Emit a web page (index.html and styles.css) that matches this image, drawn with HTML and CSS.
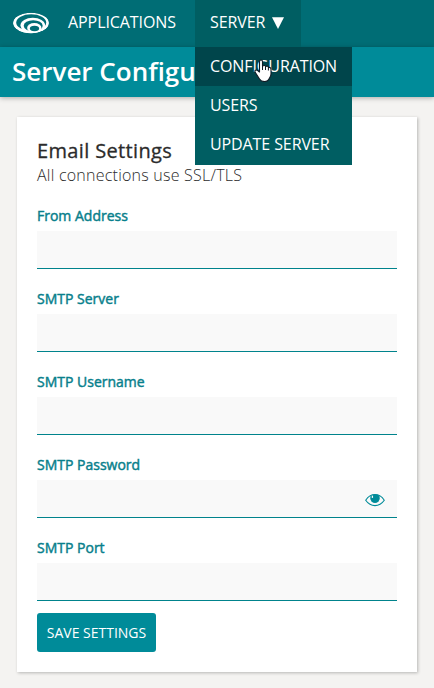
FILE: index.html
```html
<!DOCTYPE html>
<html lang="en">
<head>
<meta charset="utf-8">
<title>Server Configuration</title>
<link rel="stylesheet" href="styles.css">
</head>
<body>
<nav class="nav">
  <a class="logo" href="#" aria-label="Home">
    <svg width="38" height="24" viewBox="0 0 38 24">
      <defs><clipPath id="shell"><ellipse cx="19" cy="12" rx="18" ry="10.200"/></clipPath></defs>
      <g clip-path="url(#shell)">
        <ellipse cx="19" cy="12" rx="18" ry="10.200" fill="#fff"/>
        <ellipse cx="19.200" cy="11.500" rx="15" ry="8.200" fill="#006d75"/>
        <ellipse cx="20.800" cy="14.300" rx="12.300" ry="7.600" fill="#fff"/>
        <ellipse cx="21.200" cy="14.800" rx="9.500" ry="5.600" fill="#006d75"/>
        <ellipse cx="22.300" cy="17" rx="7.200" ry="4.900" fill="#fff"/>
        <ellipse cx="22.500" cy="17.500" rx="4.600" ry="2.700" fill="#006d75"/>
        <path d="M7 17.500Q12 22.500 23 20.800L20 24H6Z" fill="#fff"/>
      </g>
    </svg>
  </a>
  <a class="nav-link apps" href="#">APPLICATIONS</a>
  <div class="nav-group">
    <a class="nav-link open" href="#"><span>SERVER</span><svg class="caret" width="12" height="12" viewBox="0 0 12 12"><path fill="#fff" d="M0 .3h12L6 12Z"/></svg></a>
    <div class="menu">
      <a class="menu-item hover" href="#">CONFIGURATION</a>
      <a class="menu-item" href="#">USERS</a>
      <a class="menu-item" href="#">UPDATE SERVER</a>
    </div>
  </div>
</nav>
<header class="title-bar"><h1>Server Configuration</h1></header>
<main class="card">
  <h2>Email Settings</h2>
  <p class="note">All connections use SSL/TLS</p>
  <form>
    <label class="field"><span>From Address</span><input type="text"></label>
    <label class="field"><span>SMTP Server</span><input type="text"></label>
    <label class="field"><span>SMTP Username</span><input type="text"></label>
    <label class="field"><span>SMTP Password</span><input type="password">
      <svg class="eye" width="20" height="14" viewBox="0 0 20 14"><path d="M.7 7.200Q4.500 1.500 10 1.500T19.300 7.200Q15.500 12.600 10 12.600T.7 7.200Z" fill="none" stroke="#008b99" stroke-width="1.100"/><path d="M5.500 2.500Q10 .5 14.500 2.500 15.500 6 13.500 8.500 10 11.500 6.500 8.500 4.500 6 5.500 2.500Z" fill="#008b99"/><path d="M7.400 2.600V4.900" fill="none" stroke="#f9f9f9" stroke-width="1.300"/></svg>
    </label>
    <label class="field"><span>SMTP Port</span><input type="text"></label>
    <button type="button">SAVE SETTINGS</button>
  </form>
</main>
<svg class="cursor" width="18" height="23" viewBox="0 0 18 23"><path d="M5.500 13V2.700Q5.500 1 7 1t1.500 1.700V7Q11 5.800 11.700 7.500 14 6.500 14.500 8.500 17 8 17 10.500V15q0 2-1.500 4-1.500 3.500-5 3.500T5.500 20L2 14.500Q.2 12.300 1.300 11.300 2.500 10.200 5.500 13Z" fill="#fff" stroke="#111b25" stroke-width="1.100" stroke-linejoin="round"/><path d="M8.500 7v4M11.500 7.500V11M14.400 8.500v3" fill="none" stroke="#111b25"/></svg>
</body>
</html>
```

FILE: styles.css
```css
* { box-sizing: border-box; }
body { margin: 0; min-height: 688px; background: #f4f3f1; color: #2b2b2b; font-family: "Open Sans", "Noto Sans", sans-serif; overflow: hidden; }
a { color: #fff; text-decoration: none; }
.nav { display: flex; height: 47px; background: #006d75; }
.logo { width: 53px; padding: 11px 0 0 12px; }
.logo svg { display: block; }
.nav-link { display: flex; align-items: center; height: 47px; padding: 0 0 3px 15px; font-size: 16px; letter-spacing: -.08px; white-space: nowrap; }
.apps { width: 142px; }
.nav-group { position: relative; }
.open { width: 106px; background: #005e62; }
.caret { margin: 2px 0 0 7px; }
.menu { position: absolute; z-index: 2; top: 47px; left: 0; width: 157px; background: #005e62; padding-bottom: 1px; }
.menu-item { display: flex; align-items: center; height: 39px; padding: 0 0 1px 15px; font-size: 16px; letter-spacing: -.1px; white-space: nowrap; }
.hover { background: #00454b; }
.title-bar { height: 50px; padding-left: 12px; background: #008b99; box-shadow: 0 1px 5px rgba(0, 0, 0, .3); }
h1 { margin: 0; width: 184px; overflow: hidden; color: #fff; font-size: 26px; line-height: 49px; font-weight: 600; white-space: nowrap; }
.card { width: 400px; height: 555px; margin: 20px 0 0 17px; padding: 20px; background: #fff; box-shadow: 1px 1px 3px rgba(0, 0, 0, .25); }
h2 { margin: 0; font-size: 20px; line-height: 27px; font-weight: 500; letter-spacing: .36px; -webkit-text-stroke: .3px #2b2b2b; }
.note { margin: 0 0 18px; font-size: 16px; line-height: 22px; font-weight: 300; letter-spacing: .23px; }
.field { position: relative; display: block; height: 83px; }
.field span { display: block; height: 27px; color: #087f8c; font-size: 14px; line-height: 24px; font-weight: 400; -webkit-text-stroke: .45px #087f8c; }
.field input { display: block; width: 360px; height: 38px; padding: 0 10px; border: 0; border-bottom: 1px solid #00838c; border-radius: 0; background: #f9f9f9; font: inherit; }
.eye { position: absolute; right: 12px; top: 40px; }
button { display: block; margin-top: -6px; width: 119px; height: 39px; padding: 0; border: 0; border-radius: 3px; background: #008b99; color: #fff; font: 14px "Open Sans", "Noto Sans", sans-serif; white-space: nowrap; }
.cursor { position: absolute; z-index: 3; left: 254px; top: 59px; }
```
